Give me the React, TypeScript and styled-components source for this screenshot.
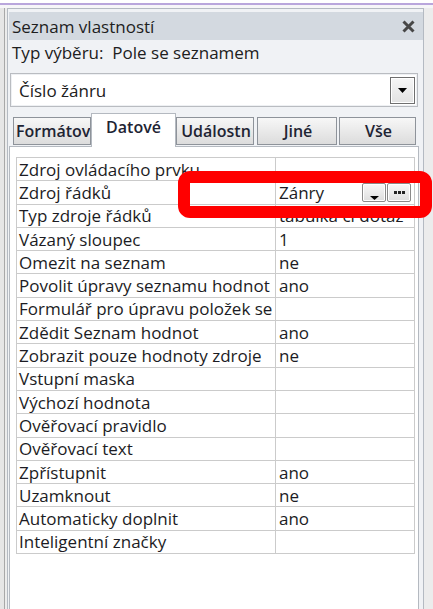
import React from "react";
import styled, { createGlobalStyle } from "styled-components";

const GlobalStyle = createGlobalStyle`
  html, body {
    margin: 0;
    padding: 0;
  }
  body {
    width: 433px;
    height: 609px;
    overflow: hidden;
    background: #dfe2e6;
    font-family: "Open Sans", "Noto Sans", "DejaVu Sans", sans-serif;
    color: #202020;
  }
`;

const Screen = styled.div`
  position: relative;
  width: 433px;
  height: 609px;
  display: flex;
  flex-direction: column;
  overflow: hidden;
`;

const TopStrip = styled.div`
  height: 8px;
  flex: none;
  background: linear-gradient(#ffffff 0 3px, #b9a6dc 3px 5px, #f6f6f8 5px);
`;

const Workspace = styled.div`
  flex: 1;
  display: flex;
  min-height: 0;
  padding: 0 9px 0 7px;
  background: linear-gradient(to right, #e6e6e6 0 4px, #a8a8a8 4px 5px, #ececec 5px);
`;

const Panel = styled.div`
  flex: 1;
  display: flex;
  flex-direction: column;
  border: 1px solid #b4bac2;
  border-bottom: none;
  background: #f0f2f5;
  padding: 3px 0 0 1px;
`;

const TitleBar = styled.div`
  height: 28px;
  flex: none;
  display: flex;
  align-items: center;
  justify-content: space-between;
  padding: 0 8px 0 3px;
  background: #d3d9e0;
  font-size: 17px;
  color: #1e1e1e;
`;

const SelectionLine = styled.div`
  height: 24px;
  display: flex;
  align-items: center;
  padding-left: 3px;
  font-size: 17px;
  white-space: pre;
`;

const Combo = styled.div`
  height: 34px;
  margin: 9px 5px 0 1px;
  box-sizing: border-box;
  display: flex;
  align-items: center;
  justify-content: space-between;
  padding: 0 2px 0 8px;
  background: #ffffff;
  border: 1px solid #b9bcc1;
  box-shadow: inset 0 0 0 1px #eef0f3;
  font-size: 17px;
`;

const ComboButton = styled.div`
  width: 25px;
  height: 27px;
  box-sizing: border-box;
  display: flex;
  align-items: center;
  justify-content: center;
  border: 1px solid #6f6f6f;
  box-shadow: inset 0 0 0 1px #ffffff;
  background: linear-gradient(#f6f6f6, #e2e2e2);
`;

const TabRow = styled.div`
  height: 34px;
  margin-top: 6px;
  display: flex;
  align-items: flex-end;
  padding-left: 4px;
  position: relative;
  z-index: 1;
`;

const Tab = styled.div<{ $active?: boolean; $w: number; $gap?: number; $align?: string }>`
  width: ${p => p.$w}px;
  margin-left: ${p => p.$gap || 0}px;
  height: ${p => (p.$active ? 34 : 28)}px;
  margin-bottom: ${p => (p.$active ? 0 : 2)}px;
  box-sizing: border-box;
  display: flex;
  align-items: center;
  justify-content: ${p => p.$align || "center"};
  padding: ${p => (p.$active ? "0 0 8px 0" : "0 0 0 2px")};
  overflow: hidden;
  white-space: nowrap;
  font-size: 16px;
  font-weight: 600;
  color: #1e2433;
  border: 1px solid ${p => (p.$active ? "#b4b9c0" : "#8e939a")};
  border-bottom: ${p => (p.$active ? "none" : "1px solid #8e939a")};
  background: ${p => (p.$active ? "#ffffff" : "linear-gradient(#f7f7f7, #dcdcdc)")};
`;

const TabBody = styled.div`
  flex: 1;
  margin: -1px 4px 0 0;
  padding: 10px 3px 0 6px;
  background: #ffffff;
  border: 1px solid #b4b9c0;
  border-bottom: none;
`;

const Grid = styled.div`
  display: grid;
  grid-template-columns: 259px 139px;
  grid-auto-rows: 23.3px;
  border-top: 1px solid #cbcbcb;
  border-left: 1px solid #cbcbcb;
`;

const Cell = styled.div<{ $value?: boolean }>`
  box-sizing: border-box;
  display: flex;
  align-items: center;
  justify-content: space-between;
  padding: 0 3px 0 ${p => (p.$value ? 3 : 2)}px;
  border-right: 1px solid #cbcbcb;
  border-bottom: 1px solid #cbcbcb;
  font-size: 17px;
  white-space: nowrap;
  overflow: hidden;
  color: #1c1c24;
`;

const MiniButtons = styled.div`
  display: flex;
  gap: 1px;
`;

const MiniButton = styled.div<{ $arrow?: boolean }>`
  width: 24px;
  height: 19px;
  box-sizing: border-box;
  display: flex;
  align-items: ${p => (p.$arrow ? "flex-end" : "center")};
  justify-content: center;
  padding-bottom: ${p => (p.$arrow ? 1 : 0)}px;
  border: 1px solid #8a8a8a;
  border-radius: 2px;
  box-shadow: inset 0 0 0 1px #ffffff;
  background: linear-gradient(#f8f8f8, #dedede);
`;

const Highlight = styled.div`
  position: absolute;
  left: 178px;
  top: 171px;
  width: 254px;
  height: 47px;
  box-sizing: border-box;
  border: 12px solid #ff0000;
  border-radius: 12px;
  pointer-events: none;
`;

const rows: [string, string][] = [
  ["Zdroj ovládacího prvku", ""],
  ["Zdroj řádků", "Zánry"],
  ["Typ zdroje řádků", "tabulka či dotaz"],
  ["Vázaný sloupec", "1"],
  ["Omezit na seznam", "ne"],
  ["Povolit úpravy seznamu hodnot", "ano"],
  ["Formulář pro úpravu položek se", ""],
  ["Zdědit Seznam hodnot", "ano"],
  ["Zobrazit pouze hodnoty zdroje", "ne"],
  ["Vstupní maska", ""],
  ["Výchozí hodnota", ""],
  ["Ověřovací pravidlo", ""],
  ["Ověřovací text", ""],
  ["Zpřístupnit", "ano"],
  ["Uzamknout", "ne"],
  ["Automaticky doplnit", "ano"],
  ["Inteligentní značky", ""],
];

function CloseIcon() {
  return (
    <svg width="13" height="13" viewBox="0 0 13 13">
      <path d="M1.5 1.5 L11.5 11.5 M11.5 1.5 L1.5 11.5" stroke="#474747" strokeWidth="3" />
    </svg>
  );
}

function DownArrow(props: { w: number; h: number }) {
  return (
    <svg width={props.w} height={props.h} viewBox={`0 0 ${props.w} ${props.h}`}>
      <path d={`M0 0 L${props.w} 0 L${props.w / 2} ${props.h} Z`} fill="#000" />
    </svg>
  );
}

function Dots() {
  return (
    <svg width="11" height="3" viewBox="0 0 11 3">
      <rect x="0" y="0" width="3" height="3" fill="#222" />
      <rect x="4" y="0" width="3" height="3" fill="#222" />
      <rect x="8" y="0" width="3" height="3" fill="#222" />
    </svg>
  );
}

export default function App() {
  return (
    <Screen>
      <GlobalStyle />
      <TopStrip />
      <Workspace>
        <Panel>
          <TitleBar>
            <span>Seznam vlastností</span>
            <CloseIcon />
          </TitleBar>
          <SelectionLine>Typ výběru:  Pole se seznamem</SelectionLine>
          <Combo>
            <span>Číslo žánru</span>
            <ComboButton>
              <DownArrow w={9} h={5} />
            </ComboButton>
          </Combo>
          <TabRow>
            <Tab $w={78} $align="flex-start">Formátov</Tab>
            <Tab $w={85} $active>Datové</Tab>
            <Tab $w={78}>Událostn</Tab>
            <Tab $w={80} $gap={3}>Jiné</Tab>
            <Tab $w={77} $gap={2}>Vše</Tab>
          </TabRow>
          <TabBody>
            <Grid>
              {rows.map(([name, value]) => (
                <React.Fragment key={name}>
                  <Cell>{name}</Cell>
                  <Cell $value>
                    <span>{value}</span>
                    {value === "Zánry" && (
                      <MiniButtons>
                        <MiniButton $arrow>
                          <DownArrow w={9} h={4} />
                        </MiniButton>
                        <MiniButton>
                          <Dots />
                        </MiniButton>
                      </MiniButtons>
                    )}
                  </Cell>
                </React.Fragment>
              ))}
            </Grid>
          </TabBody>
        </Panel>
      </Workspace>
      <Highlight />
    </Screen>
  );
}
